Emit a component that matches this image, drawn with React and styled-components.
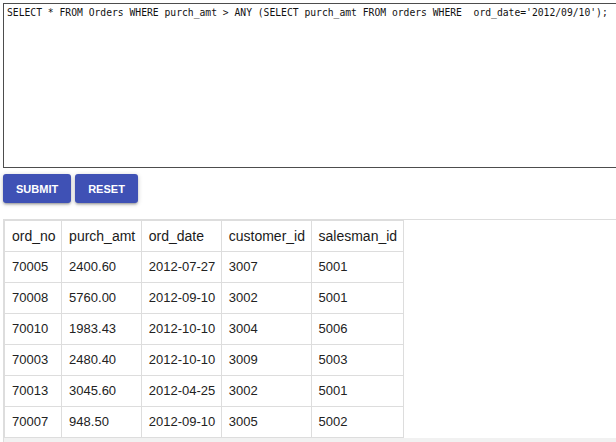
import React from "react";
import styled, { createGlobalStyle } from "styled-components";

const Global = createGlobalStyle`
  html, body {
    margin: 0;
    padding: 0;
    overflow: hidden;
    background: #ffffff;
  }
  body {
    font-family: "Liberation Sans", Arial, sans-serif;
  }
`;

const Page = styled.div`
  width: 616px;
  height: 442px;
  overflow: hidden;
  padding: 3px 0 0 3px;
  box-sizing: border-box;
`;

const Editor = styled.textarea`
  display: block;
  box-sizing: border-box;
  width: 640px;
  height: 165px;
  margin: 0;
  padding: 2px 3px;
  border: 1px solid #4d4d4d;
  border-radius: 0;
  font-family: "DejaVu Sans Mono", "Liberation Mono", monospace;
  font-size: 9.7px;
  line-height: 14px;
  color: #111;
  background: #fff;
  resize: none;
  outline: none;
  white-space: pre;
  overflow: hidden;
`;

const Toolbar = styled.div`
  display: flex;
  gap: 4px;
  margin-top: 6px;
`;

const Button = styled.button`
  height: 29px;
  padding: 0 13px;
  border: none;
  border-radius: 3px;
  background: #3f51b5;
  color: #ffffff;
  font-family: "Liberation Sans", Arial, sans-serif;
  font-size: 11px;
  font-weight: bold;
  text-transform: uppercase;
  cursor: pointer;
  box-shadow: 0 1px 5px rgba(0, 0, 0, 0.2), 0 2px 2px rgba(0, 0, 0, 0.14),
    0 3px 1px -2px rgba(0, 0, 0, 0.12);
`;

const ResultPane = styled.div`
  margin-top: 16px;
  border-top: 1px solid #dddddd;
  border-left: 1px solid #dddddd;
`;

const Table = styled.table`
  border-collapse: collapse;
  border: 1px solid #dddddd;
  font-family: "Liberation Sans", Arial, sans-serif;
`;

const Th = styled.th`
  border: 1px solid #dddddd;
  padding: 7px 5.5px 7px 7px;
  line-height: 16px;
  font-size: 14px;
  font-weight: normal;
  text-align: left;
  color: #1a1a1a;
  white-space: nowrap;
`;

const Td = styled.td`
  border: 1px solid #dddddd;
  padding: 7px 5.5px 7px 7px;
  line-height: 16px;
  font-size: 13px;
  text-align: left;
  color: #222222;
  white-space: nowrap;
`;

const ScrollTrack = styled.div`
  height: 17px;
  background: #f1f1f1;
`;

const query =
  "SELECT * FROM Orders WHERE purch_amt > ANY (SELECT purch_amt FROM orders WHERE  ord_date='2012/09/10');";

const columns = ["ord_no", "purch_amt", "ord_date", "customer_id", "salesman_id"];

const rows = [
  ["70005", "2400.60", "2012-07-27", "3007", "5001"],
  ["70008", "5760.00", "2012-09-10", "3002", "5001"],
  ["70010", "1983.43", "2012-10-10", "3004", "5006"],
  ["70003", "2480.40", "2012-10-10", "3009", "5003"],
  ["70013", "3045.60", "2012-04-25", "3002", "5001"],
  ["70007", "948.50", "2012-09-10", "3005", "5002"],
];

export default function App() {
  return (
    <>
      <Global />
      <Page>
        <Editor defaultValue={query} spellCheck={false} />
        <Toolbar>
          <Button>Submit</Button>
          <Button>Reset</Button>
        </Toolbar>
        <ResultPane>
          <Table>
            <thead>
              <tr>
                {columns.map((c) => (
                  <Th key={c}>{c}</Th>
                ))}
              </tr>
            </thead>
            <tbody>
              {rows.map((r) => (
                <tr key={r[0]}>
                  {r.map((v, i) => (
                    <Td key={i}>{v}</Td>
                  ))}
                </tr>
              ))}
            </tbody>
          </Table>
          <ScrollTrack />
        </ResultPane>
      </Page>
    </>
  );
}
